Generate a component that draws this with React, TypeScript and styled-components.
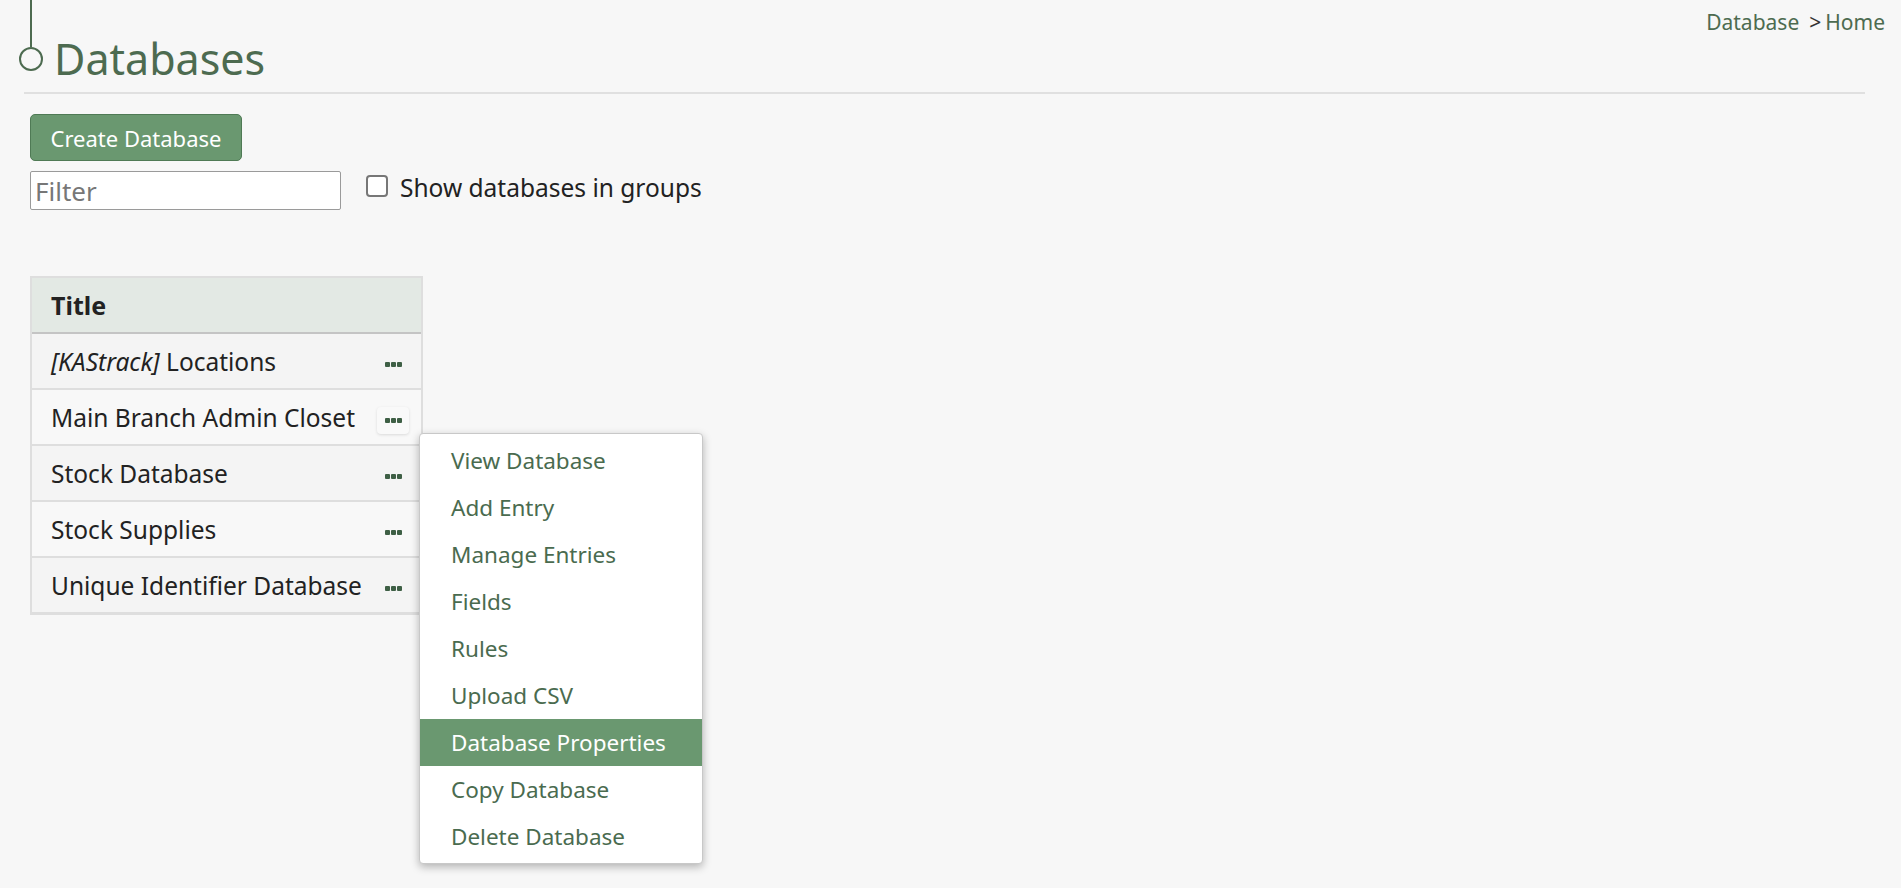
import React from 'react';
import styled, { createGlobalStyle } from 'styled-components';

const GlobalStyle = createGlobalStyle`
  body {
    margin: 0;
    background: #f7f7f7;
    font-family: "Noto Sans", "Open Sans", sans-serif;
    color: #222;
  }
`;

const Page = styled.div`
  min-height: 100vh;
  box-sizing: border-box;
  padding: 0 16px 40px 18px;
`;

const Header = styled.div`
  display: flex;
  align-items: flex-start;
  justify-content: space-between;
  height: 92px;
`;

const TitleWrap = styled.div`
  display: flex;
  align-items: flex-start;
`;

const Heading = styled.h1`
  margin: 31px 0 0 8px;
  font-size: 43px;
  font-weight: 400;
  line-height: 56px;
  color: #4d6b50;
`;

const Crumbs = styled.div`
  margin-top: 8px;
  font-size: 21px;
  color: #4d6b50;
  span {
    color: #333;
    margin: 0 4px 0 10px;
  }
`;

const Divider = styled.hr`
  margin: 0 20px 0 6px;
  border: none;
  border-top: 2px solid #e0e0e0;
`;

const Content = styled.div`
  padding-left: 12px;
`;

const PrimaryButton = styled.button`
  margin-top: 20px;
  width: 212px;
  height: 47px;
  background: #6a9870;
  border: 1px solid #4f7a55;
  border-radius: 5px;
  color: #fff;
  font-family: inherit;
  font-size: 22px;
  cursor: pointer;
`;

const FilterRow = styled.div`
  display: flex;
  align-items: center;
  gap: 25px;
  margin-top: 10px;
`;

const FilterInput = styled.input`
  width: 311px;
  height: 39px;
  box-sizing: border-box;
  border: 1px solid #9a9a9a;
  border-radius: 2px;
  background: #fff;
  padding: 0 4px;
  font-family: inherit;
  font-size: 26px;
  &::placeholder {
    color: #777;
  }
`;

const CheckLabel = styled.label`
  display: flex;
  align-items: center;
  gap: 12px;
  font-size: 24.5px;
  color: #222;
  margin-top: -6px;
`;

const Box = styled.span`
  width: 18px;
  height: 18px;
  border: 2px solid #777;
  border-radius: 4px;
  background: #fff;
  margin-top: -4px;
`;

const Table = styled.div`
  margin-top: 66px;
  width: 389px;
  border: 2px solid #dedede;
  border-bottom-width: 1px;
`;

const HeadCell = styled.div`
  height: 54px;
  display: flex;
  align-items: center;
  padding-left: 19px;
  background: #e3e9e4;
  border-bottom: 2px solid #c4c4c4;
  font-weight: 700;
  font-size: 25px;
`;

const Row = styled.div<{ $alt?: boolean }>`
  position: relative;
  height: 54px;
  display: flex;
  align-items: center;
  justify-content: space-between;
  padding: 0 12px 0 19px;
  background: ${(p) => (p.$alt ? '#f8f8f8' : '#f4f4f4')};
  border-bottom: 2px solid #dedede;
  font-size: 24.5px;
  white-space: nowrap;
`;

const DotsButton = styled.button<{ $open?: boolean }>`
  display: flex;
  gap: 1px;
  align-items: center;
  justify-content: center;
  flex-shrink: 0;
  width: 32px;
  height: 27px;
  margin-top: 6px;
  padding: 0;
  border: none;
  border-radius: 4px;
  cursor: pointer;
  background: ${(p) => (p.$open ? '#f9f9f9' : 'transparent')};
  box-shadow: ${(p) => (p.$open ? '0 1px 3px rgba(0,0,0,0.12)' : 'none')};
  i {
    width: 5px;
    height: 5px;
    border-radius: 1px;
    background: #3e5f45;
  }
`;

const Menu = styled.ul`
  position: absolute;
  left: 387px;
  top: 43px;
  z-index: 5;
  width: 282px;
  margin: 0;
  padding: 3px 0;
  list-style: none;
  background: #fff;
  border: 1px solid #c8c8c8;
  border-radius: 4px;
  box-shadow: 0 3px 8px rgba(0, 0, 0, 0.28);
`;

const MenuItem = styled.li<{ $active?: boolean }>`
  height: 47px;
  display: flex;
  align-items: center;
  padding-left: 31px;
  font-size: 22.5px;
  color: ${(p) => (p.$active ? '#fff' : '#4a6b4f')};
  background: ${(p) => (p.$active ? '#6a9870' : 'transparent')};
  cursor: pointer;
`;

const Dots = ({ open }: { open?: boolean }) => (
  <DotsButton $open={open}>
    <i />
    <i />
    <i />
  </DotsButton>
);

const menuItems = [
  'View Database',
  'Add Entry',
  'Manage Entries',
  'Fields',
  'Rules',
  'Upload CSV',
  'Database Properties',
  'Copy Database',
  'Delete Database',
];

const rows: { title: React.ReactNode; open?: boolean }[] = [
  { title: <><em>[KAStrack]</em> Locations</> },
  { title: 'Main Branch Admin Closet', open: true },
  { title: 'Stock Database' },
  { title: 'Stock Supplies' },
  { title: 'Unique Identifier Database' },
];

export default function App() {
  return (
    <Page>
      <GlobalStyle />
      <Header>
        <TitleWrap>
          <svg width="28" height="74" viewBox="0 0 28 74">
            <line x1="13" y1="0" x2="13" y2="47" stroke="#4d6b50" strokeWidth="2" />
            <circle cx="13" cy="59" r="11" fill="none" stroke="#4d6b50" strokeWidth="2" />
          </svg>
          <Heading>Databases</Heading>
        </TitleWrap>
        <Crumbs>
          Database<span>&gt;</span>Home
        </Crumbs>
      </Header>
      <Divider />
      <Content>
        <PrimaryButton>Create Database</PrimaryButton>
        <FilterRow>
          <FilterInput placeholder="Filter" />
          <CheckLabel>
            <Box />
            Show databases in groups
          </CheckLabel>
        </FilterRow>
        <Table>
          <HeadCell>Title</HeadCell>
          {rows.map((r, i) => (
            <Row key={i} $alt={i % 2 === 1}>
              <span>{r.title}</span>
              <Dots open={r.open} />
              {r.open && (
                <Menu>
                  {menuItems.map((m) => (
                    <MenuItem key={m} $active={m === 'Database Properties'}>
                      {m}
                    </MenuItem>
                  ))}
                </Menu>
              )}
            </Row>
          ))}
        </Table>
      </Content>
    </Page>
  );
}
